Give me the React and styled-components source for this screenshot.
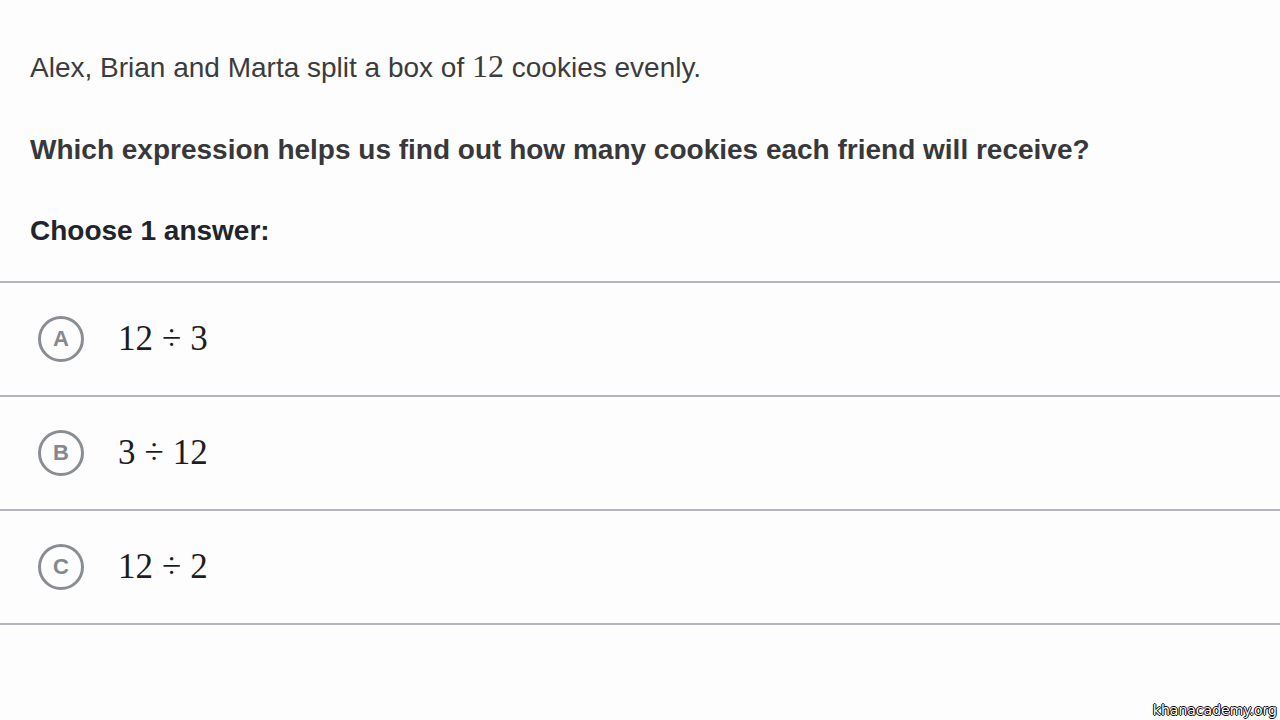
import React from "react";
import styled, { createGlobalStyle } from "styled-components";

const GlobalStyle = createGlobalStyle`
  html, body {
    margin: 0;
    padding: 0;
    background: #fdfdfd;
  }
  body {
    font-family: "Liberation Sans", Arial, sans-serif;
  }
`;

const choices = [
  { letter: "A", left: "12", right: "3" },
  { letter: "B", left: "3", right: "12" },
  { letter: "C", left: "12", right: "2" },
];

function App() {
  return (
    <Page>
      <GlobalStyle />
      <Question>
        <Intro>
          Alex, Brian and Marta split a box of <MathNum>12</MathNum> cookies
          evenly.
        </Intro>
        <Prompt>
          Which expression helps us find out how many cookies each friend will
          receive?
        </Prompt>
        <Instruction>Choose 1 answer:</Instruction>
      </Question>
      <ChoiceList>
        {choices.map((c) => (
          <ChoiceRow key={c.letter}>
            <LetterCircle>{c.letter}</LetterCircle>
            <Expression>
              {c.left}
              <Divide>÷</Divide>
              {c.right}
            </Expression>
          </ChoiceRow>
        ))}
      </ChoiceList>
      <Watermark>khanacademy.org</Watermark>
    </Page>
  );
}

export default App;

const Page = styled.div`
  position: relative;
  width: 1280px;
  height: 720px;
  overflow: hidden;
  background: #fdfdfd;
`;

const Question = styled.div`
  padding: 46px 30px 0;
`;

const Intro = styled.p`
  margin: 0;
  font-size: 28px;
  line-height: 40px;
  color: #3b3b3d;
`;

const MathNum = styled.span`
  font-family: "Liberation Serif", "Times New Roman", serif;
  font-size: 32px;
`;

const Prompt = styled.p`
  margin: 42px 0 0;
  font-size: 28px;
  line-height: 40px;
  font-weight: bold;
  color: #38383a;
`;

const Instruction = styled.p`
  margin: 41px 0 0;
  font-size: 28px;
  line-height: 40px;
  font-weight: bold;
  color: #21242c;
`;

const ChoiceList = styled.div`
  margin-top: 30px;
  border-top: 2px solid #b3b4bd;
`;

const ChoiceRow = styled.div`
  display: flex;
  align-items: center;
  gap: 34px;
  height: 112px;
  padding-left: 38px;
  border-bottom: 2px solid #b3b4bd;
`;

const LetterCircle = styled.div`
  box-sizing: border-box;
  width: 46px;
  height: 46px;
  border-radius: 50%;
  border: 3px solid #8a8d92;
  display: flex;
  align-items: center;
  justify-content: center;
  font-size: 22px;
  font-weight: bold;
  color: #85888e;
`;

const Expression = styled.div`
  font-family: "Liberation Serif", "Times New Roman", serif;
  font-size: 35px;
  color: #1d1d1f;
`;

const Divide = styled.span`
  margin: 0 9px;
`;

const Watermark = styled.div`
  position: absolute;
  right: 3px;
  bottom: 2px;
  font-family: "DejaVu Sans", sans-serif;
  font-size: 14px;
  color: #ffffff;
  text-shadow: -1px 0 #000, 1px 0 #000, 0 -1px #000, 0 1px #000;
`;
